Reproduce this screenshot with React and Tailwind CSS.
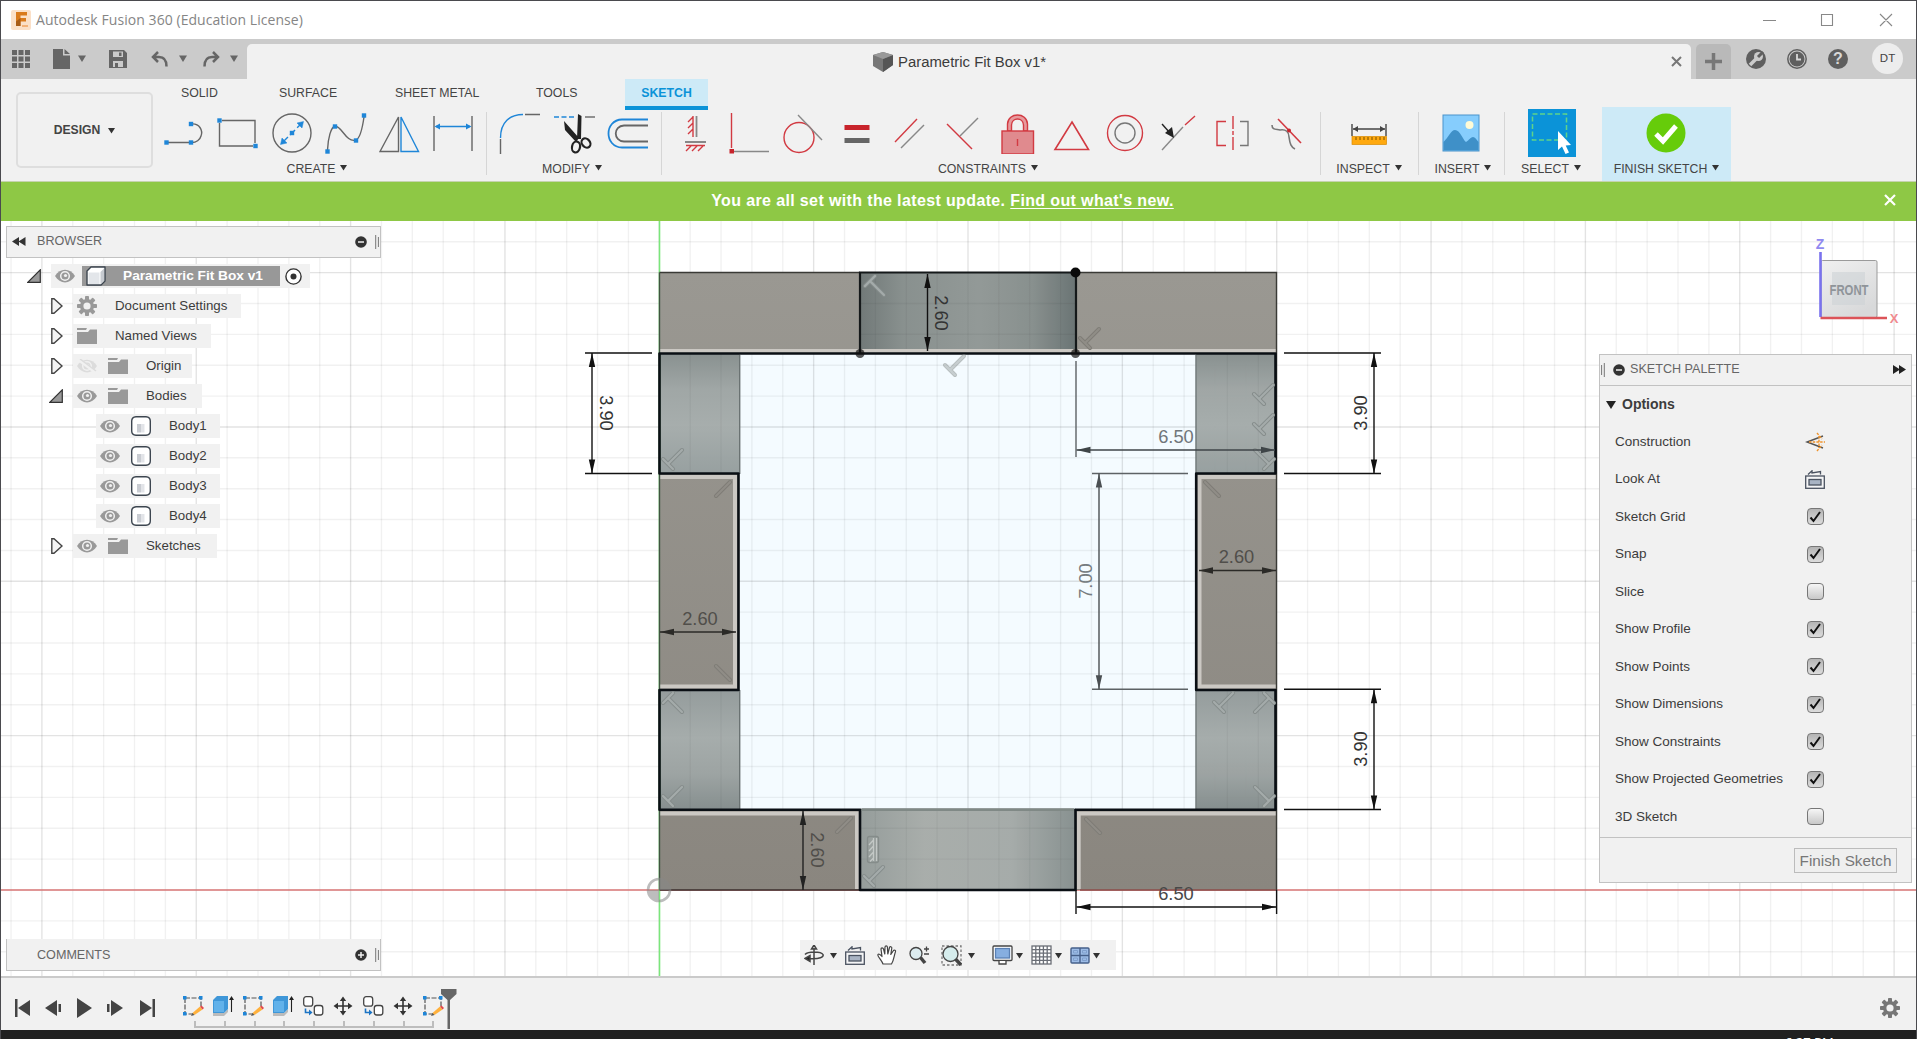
import React from "react";

const BLUE = "#1f86d8";
const RED = "#d23a42";
const GREY = "#666666";

function Arrow({ className = "", color = "#333", w = 7 }) {
  return (
    <svg className={"shrink-0 " + className} width={w} height={7} viewBox="0 0 8 7">
      <path d="M0 0.5H8L4 7Z" fill={color} />
    </svg>
  );
}

/* ---------- ribbon icons, 42 x 42, centred on 21,21 ---------- */
function Ico({ children }) {
  return (
    <svg width="42" height="42" viewBox="0 0 42 42" fill="none" strokeWidth="1.4" stroke={GREY}>
      {children}
    </svg>
  );
}
const Pt = ({ x, y }) => <rect x={x - 2.2} y={y - 2.2} width="4.4" height="4.4" fill={BLUE} stroke="none" />;

const createIcons = [
  <Ico key="line">
    <path d="M2 30.500H25M27 12C36 11 39 19 37 24C36 28 32 30.500 28 30.500" />
    <Pt x={2.500} y={30.500} /><Pt x={27} y={30.500} /><Pt x={27} y={12} />
  </Ico>,
  <Ico key="rect">
    <path d="M5 8.500H38V31M36 34H2.500V11" />
    <Pt x={2.500} y={8.500} /><Pt x={38.500} y={34} />
  </Ico>,
  <Ico key="circle">
    <circle cx="21" cy="21" r="19" />
    <g stroke={BLUE}>
      <path d="M12 30L30 12" strokeDasharray="7 3" />
      <path d="M9.500 32.500L11 26L16 31ZM32.500 9.500L31 16L26 11Z" fill={BLUE} strokeWidth=".5" />
    </g>
    <Pt x={21} y={21} />
  </Ico>,
  <Ico key="spline">
    <path d="M2.500 38C3 26 6 15 10 14C17 14 21 31 31 28C36 26 38 12 39 5" />
    <Pt x={2.500} y={39.500} /><Pt x={10} y={14.500} /><Pt x={31} y={28.500} /><Pt x={39} y={3.500} />
  </Ico>,
  <Ico key="mirror">
    <path d="M19.500 5V39.500H1Z" />
    <path d="M22 5V39.500H39.500Z" stroke={BLUE} />
  </Ico>,
  <Ico key="dim">
    <path d="M2 4V39M40 4V39" />
    <path d="M4 14.500H38" stroke={BLUE} />
    <path d="M2.500 14.500L8 11.500V17.500ZM39.500 14.500L34 11.500V17.500Z" fill={BLUE} stroke="none" />
  </Ico>,
];

const modifyIcons = [
  <Ico key="fillet">
    <path d="M26 2.500H41M1.500 27V42" />
    <path d="M1.500 26C1.500 10 11 2.500 24 2.500" stroke={BLUE} />
  </Ico>,
  <Ico key="trim">
    <path d="M1 5H21" stroke={BLUE} strokeDasharray="5 2.500" /><path d="M32 5H42" />
    <path d="M25 2L28.500 4L28 27L24 27ZM11 9L26 26L23 30L12 18Z" fill="#222" stroke="none" />
    <ellipse cx="23" cy="35" rx="4" ry="5.500" stroke="#222" strokeWidth="2.200" transform="rotate(12 23 35)" />
    <ellipse cx="33" cy="31" rx="4" ry="5" stroke="#222" strokeWidth="2.200" transform="rotate(-40 33 31)" />
  </Ico>,
  <Ico key="offset">
    <path d="M41 7.500H15C-3 8 -3 35 15 35.500H41" stroke={BLUE} strokeWidth="1.800" />
    <path d="M41 13.500H17C6 14 6 29 17 29.500H41" strokeWidth="1.800" />
  </Ico>,
];

const constraintIcons = [
  <Ico key="hv">
    <path d="M22.500 4V25M11 30H32" stroke="#888" strokeWidth="1.800" />
    <path d="M19 4V25M12 33.500H31M19 5L14 10M19 11L14 16M19 17L14 22M17 34L12 39M23 34L18 39M29 34L24 39" stroke={RED} />
  </Ico>,
  <Ico key="coincident">
    <path d="M3.500 1V36" stroke={RED} /><path d="M6 39.500H41" stroke="#888" />
    <rect x="1.500" y="37" width="4.500" height="4.500" fill="#c8242c" stroke="none" />
  </Ico>,
  <Ico key="tangent">
    <circle cx="17" cy="25.500" r="15" stroke={RED} /><path d="M16 3L40 28" stroke="#888" />
  </Ico>,
  <Ico key="equal">
    <rect x="8.500" y="13" width="25" height="5" fill="#c8242c" stroke="none" />
    <rect x="8.500" y="26" width="25" height="5" fill="#666" stroke="none" />
  </Ico>,
  <Ico key="parallel">
    <path d="M6 30L28 7" stroke={RED} /><path d="M12 36L35 13" stroke="#888" />
  </Ico>,
  <Ico key="perp">
    <path d="M4 12L29 37" stroke={RED} /><path d="M17 24L35 6" stroke="#888" />
  </Ico>,
  <Ico key="lock">
    <path d="M10.500 19V12C11 0 30 0 30.500 12V19H26.500V13C26 5 15 5 14.500 13V19Z" fill="#e79a9d" stroke={RED} />
    <rect x="5" y="19" width="31.500" height="23" fill="#e08a8e" stroke={RED} /><path d="M20.500 27V34" stroke={RED} />
  </Ico>,
  <Ico key="mid"><path d="M21 10L37.500 37.500H4Z" stroke={RED} strokeWidth="1.600" /></Ico>,
  <Ico key="concentric">
    <circle cx="21" cy="21" r="17.500" stroke={RED} /><circle cx="21" cy="21" r="10" stroke="#777" />
  </Ico>,
  <Ico key="collinear">
    <path d="M4 38L25 15" stroke="#888" /><path d="M27 13L37 4" stroke={RED} />
    <path d="M4 12L12 21" stroke="#222" /><path d="M16 26L7 21L14 15Z" fill="#222" stroke="none" />
  </Ico>,
  <Ico key="symmetry">
    <path d="M14 9.500H5V33.500H14M21 4V17M21 19V23M21 25V38" stroke={RED} /><path d="M28 9.500H36V33.500H28" stroke="#777" />
  </Ico>,
  <Ico key="curvature">
    <path d="M12 7L35 31" stroke={RED} strokeWidth="1.600" />
    <path d="M6 13C6 18 10 17 14 18C20 17 23 20 23 25C24 32 25 35 29 37" stroke="#777" strokeWidth="1.600" />
    <circle cx="23" cy="18.500" r="2" fill="#c8242c" stroke="none" />
  </Ico>,
];

function Group({ icons, label, className = "", labelClass = "pr-[4px]" }) {
  return (
    <div className={"flex flex-col items-center " + className}>
      <div className="flex h-[50px] items-center pt-px">
        {icons.map((icon, i) => (
          <div key={i} className="flex w-[53.8px] justify-center">{icon}</div>
        ))}
      </div>
      <div className={"flex h-6 items-center gap-[5px] pt-px text-[12.3px] leading-none text-[#444] " + labelClass}>
        <span className="whitespace-nowrap">{label}</span>
        <Arrow className="-mt-1" />
      </div>
    </div>
  );
}
const Sep = () => <div className="mt-[5px] h-[63px] w-px shrink-0 bg-[#d6d6d6]" />;

const inspectIcon = (
  <Ico>
    <path d="M4 12V24M38 12V24M5 17H37" stroke="#444" />
    <path d="M5 17L10 14V20ZM37 17L32 14V20Z" fill="#444" stroke="none" />
    <rect x="4" y="24.500" width="34.500" height="8" fill="#ffa90f" stroke="#d98a00" strokeWidth=".7" />
    <path d="M8 25V28M12 25V28M16 25V28M20 25V28M24 25V28M28 25V28M32 25V28M36 25V28" stroke="#7a5200" strokeWidth="1" />
  </Ico>
);
const insertIcon = (
  <Ico>
    <rect x="3" y="3" width="36" height="36" fill="#86cdfd" stroke="#4a94cc" strokeWidth="1" />
    <path d="M3.500 30C8 26 11 18 15 18C20 18 23 28 26 30C29 28 31 25 33 25C35 25 37 28 38.500 30V38.500H3.500Z" fill="#3f90c8" stroke="none" />
    <circle cx="29.500" cy="13" r="4" fill="#fffbd6" stroke="none" />
  </Ico>
);
const selectIcon = (
  <svg className="-ml-[2px]" width="48" height="48" viewBox="0 0 48 48">
    <rect width="48" height="48" fill="#0b93d8" />
    <rect x="4.500" y="5" width="34" height="26" fill="none" stroke="#5fd38a" strokeWidth="1.500" strokeDasharray="5 2.500" />
    <path d="M30 22V41L34 37.500L37.500 45L41 43.500L37.700 36.500L43 36Z" fill="#fff" />
  </svg>
);
const finishIcon = (
  <Ico>
    <circle cx="21" cy="21" r="19.500" fill="#66cc0a" stroke="none" />
    <path d="M11 22L18 29L31 14" stroke="#fff" strokeWidth="5" />
  </Ico>
);

/* ---------- title bar and tab strip ---------- */
function TitleBar() {
  return (
    <div className="flex h-[39px] items-center bg-white pl-[11px]">
      <svg width="20" height="20" viewBox="0 0 20 20">
        <rect width="20" height="20" rx="2" fill="#fbe0c8" />
        <path d="M5 2H16V5.500H9.500V8H15V11.500H9.500V16H5Z" fill="#d97a1c" />
        <path d="M5 11.500L9.500 8V16H5Z" fill="#a85c16" />
        <path d="M11 15H17V17H11Z" fill="#f3b27a" />
      </svg>
      <span className="ml-[5px] font-['Open_Sans','Noto_Sans',sans-serif] text-[14px] tracking-[0.06px] text-[#858585]">
        Autodesk Fusion 360 (Education License)
      </span>
      <svg className="ml-auto mr-[19px]" width="135" height="16" viewBox="0 0 135 16" fill="none" stroke="#888" strokeWidth="1.100">
        <path d="M0 8.500H13M58.500 2.500H69.500V13.500H58.500ZM117 2L129 14M129 2L117 14" />
      </svg>
    </div>
  );
}

function TabStrip() {
  return (
    <div className="flex h-10 bg-[#cbcbcb]">
      <div className="flex w-[247px] shrink-0 items-center pl-3">
        <svg width="18" height="18" viewBox="0 0 18 18" fill="#666">
          {[0, 6.500, 13].map((y) => [0, 6.500, 13].map((x) => <rect key={x + "-" + y} x={x} y={y} width="5" height="5" />))}
        </svg>
        <svg className="ml-[23px]" width="17" height="20" viewBox="0 0 17 20" fill="#666">
          <path d="M0 0H10V6.500H17V20H0ZM11.500 0L17 5H11.500Z" />
        </svg>
        <Arrow className="-mt-[2px] ml-2" color="#666" w={8} />
        <svg className="ml-[23px]" width="18" height="18" viewBox="0 0 18 18" fill="#666" fillRule="evenodd">
          <path d="M0 0H15L18 3V18H0ZM4 1.500V7H14V1.500ZM4 11V17H14V11ZM10 2.500H12.500V6H10ZM6 13H9V17H6Z" />
        </svg>
        <svg className="ml-6" width="17" height="16" viewBox="0 0 17 16" fill="none" stroke="#666" strokeWidth="2.500">
          <path d="M7 1L2 6L7 11M2.500 6H8C14 6 15.500 10 15.500 15.500" />
        </svg>
        <Arrow className="-mt-[2px] ml-[11px]" color="#666" w={8} />
        <svg className="ml-4" width="17" height="16" viewBox="0 0 17 16" fill="none" stroke="#666" strokeWidth="2.500">
          <path d="M10 1L15 6L10 11M14.500 6H9C3 6 1.500 10 1.500 15.500" />
        </svg>
        <Arrow className="-mt-[2px] ml-[10px]" color="#666" w={8} />
      </div>
      <div className="mt-[5px] flex w-[1444px] shrink-0 items-center rounded-t-[5px] bg-[#f1f1f1] text-[#3c3c3c]">
        <svg className="ml-[626px]" width="20" height="20" viewBox="0 0 20 20">
          <path d="M0 3L10 0L20 3V13L10 20L0 14Z" fill="#777" />
          <path d="M10 7L20 3V13L10 20Z" fill="#555" /><path d="M0 3L10 0L20 3L10 7Z" fill="#999" />
        </svg>
        <span className="ml-[5px] whitespace-nowrap pt-px text-[14.9px]">Parametric Fit Box v1*</span>
        <svg className="ml-auto mr-[9px]" width="11" height="11" viewBox="0 0 11 11" stroke="#777" strokeWidth="2">
          <path d="M1 1L10 10M10 1L1 10" />
        </svg>
      </div>
      <div className="ml-[5px] mt-[5px] flex w-[35px] items-center justify-center rounded-t-[5px] bg-[#b9b9b9]">
        <svg width="17" height="17" viewBox="0 0 17 17" stroke="#777" strokeWidth="3.500"><path d="M8.500 0V17M0 8.500H17" /></svg>
      </div>
      <svg className="ml-[15px] mt-[10px]" width="20" height="20" viewBox="0 0 20 20">
        <circle cx="10" cy="10" r="10" fill="#5f5f5f" />
        <path d="M4 16L11 9" stroke="#cbcbcb" strokeWidth="3.500" />
        <circle cx="12.500" cy="7.500" r="4.500" fill="#cbcbcb" /><path d="M12 8L17 3" stroke="#5f5f5f" strokeWidth="3" />
      </svg>
      <svg className="ml-[21px] mt-[10px]" width="20" height="20" viewBox="0 0 20 20">
        <circle cx="10" cy="10" r="9.200" fill="none" stroke="#5f5f5f" strokeWidth="1.500" /><circle cx="10" cy="10" r="7.500" fill="#5f5f5f" />
        <path d="M10 5V10.500H14" fill="none" stroke="#d8d8d8" strokeWidth="1.800" />
      </svg>
      <div className="ml-[21px] mt-[10px] flex h-5 w-5 items-center justify-center rounded-full bg-[#5f5f5f] text-[16px] font-bold text-[#d8d8d8]">?</div>
      <div className="ml-[24px] mt-[4px] flex h-[31px] w-[31px] items-center justify-center rounded-full bg-[#ededed] text-[11.5px] text-[#444]">DT</div>
    </div>
  );
}

function Ribbon() {
  return (
    <div className="flex h-[102px] bg-[#f1f1f1] text-[#444]">
      <div className="ml-4 mt-[13px] flex h-[76px] w-[137px] shrink-0 items-center justify-center gap-[8px] rounded-[5px] border-2 border-[#dedede] text-[12.2px] font-bold">
        <span className="pt-px">DESIGN</span> <Arrow />
      </div>
      <div className="flex flex-1 flex-col pl-[5px]">
        <div className="flex h-7 pl-[23px] text-[12.3px] leading-[29px]">
          <span className="w-[98px]">SOLID</span>
          <span className="w-[116px]">SURFACE</span>
          <span className="w-[141px]">SHEET METAL</span>
          <span className="w-[89px]">TOOLS</span>
          <span className="h-[31px] w-[83px] border-b-4 border-[#0b93d8] bg-[#cdeaf7] text-center font-bold text-[#0b93d8]">SKETCH</span>
        </div>
        <div className="flex h-[74px]">
          <Group className="w-[328px] pr-[6px]" icons={createIcons} label="CREATE" />
          <Sep />
          <Group className="w-[174px]" icons={modifyIcons} label="MODIFY" />
          <Sep />
          <Group className="w-[658px]" icons={constraintIcons} label="CONSTRAINTS" labelClass="pr-[6px]" />
          <Sep />
          <Group className="w-[97px]" icons={[inspectIcon]} label="INSPECT" labelClass="pr-px" />
          <Sep />
          <Group className="w-[85px]" icons={[insertIcon]} label="INSERT" labelClass="pl-[3px]" />
          <Sep />
          <Group className="w-[97px]" icons={[selectIcon]} label="SELECT" labelClass="pr-[5px]" />
          <Group className="w-[129px] bg-[#cdeaf7]" icons={[finishIcon]} label="FINISH SKETCH" labelClass="" />
        </div>
      </div>
    </div>
  );
}

/* ---------- sketch canvas ---------- */
const U = 30.87;
const OX = 659.3;
const OY = 890;

function Dim({ x1, y1, x2, y2, label, tx, ty, rot = 0, color = "#111", textColor = "#333" }) {
  const vertical = x1 === x2;
  const a = 14;
  const heads = vertical
    ? `M${x1} ${y1}l-3.200 ${a}h6.400ZM${x2} ${y2}l-3.200 ${-a}h6.400Z`
    : `M${x1} ${y1}l${a} -3.200v6.400ZM${x2} ${y2}l${-a} -3.200v6.400Z`;
  return (
    <g>
      <path d={`M${x1} ${y1}L${x2} ${y2}`} stroke={color} strokeWidth="1.400" />
      <path d={heads} fill={color} />
      <text
        x={tx} y={ty} transform={`rotate(${rot} ${tx} ${ty})`} dy="6.500" textAnchor="middle"
        fontSize="18.300" fill={textColor} stroke="none"
      >
        {label}
      </text>
    </g>
  );
}

/* perpendicular mark: cap at x,y with the stem leaving in direction dx,dy */
function Tee({ x, y, dx, dy, cap = true, dark = false }) {
  const stem = `M${x} ${y}l${dx * 14} ${dy * 14}`;
  const bar = cap ? `M${x - dy * 5} ${y + dx * 5}L${x + dy * 5} ${y - dx * 5}` : "";
  return (
    <g strokeLinecap="round" fill="none">
      <path d={stem + bar} stroke={dark ? "#7e7c76" : "#858c8b"} strokeWidth="4" />
      <path d={stem + bar} stroke={dark ? "#908d87" : "#a4abaa"} strokeWidth="2.200" />
    </g>
  );
}

function Canvas() {
  const xs = Array.from({ length: 63 }, (_, i) => i - 21);
  const ys = Array.from({ length: 24 }, (_, i) => i - 2);
  const outline =
    "M660 353.500H1275.500V473.500H1196.200V690H1275.500V809.700H1075.500V890H860V809.700H659.500V690H738.500V473.500H659.500V353.500Z";
  return (
    <svg className="absolute inset-0 font-['Liberation_Sans',Arial,sans-serif]" width="1917" height="755" viewBox="0 221 1917 755">
      <defs>
        <linearGradient id="topMid"><stop offset="0" stopColor="#6d7574" /><stop offset=".2" stopColor="#858d8b" /><stop offset=".55" stopColor="#8f9694" /><stop offset=".8" stopColor="#858d8b" /><stop offset="1" stopColor="#667070" /></linearGradient>
        <linearGradient id="botMid"><stop offset="0" stopColor="#929a98" /><stop offset=".3" stopColor="#a6aba8" /><stop offset=".7" stopColor="#a3a9a7" /><stop offset="1" stopColor="#858e8d" /></linearGradient>
        <linearGradient id="upper" x2="0" y2="1"><stop offset="0" stopColor="#858d8c" /><stop offset=".3" stopColor="#9da4a3" /><stop offset=".6" stopColor="#a4abaa" /><stop offset="1" stopColor="#949d9d" /></linearGradient>
        <linearGradient id="lower" x2="0" y2="1"><stop offset="0" stopColor="#919999" /><stop offset=".4" stopColor="#a3aaa9" /><stop offset=".7" stopColor="#9aa1a0" /><stop offset="1" stopColor="#828b8b" /></linearGradient>
        <linearGradient id="brown" gradientUnits="userSpaceOnUse" x1="0" y1="272" x2="0" y2="890"><stop offset="0" stopColor="#9a9892" /><stop offset="1" stopColor="#8a867f" /></linearGradient>
        <linearGradient id="cube" x2=".6" y2="1"><stop offset="0" stopColor="#f0f0f0" /><stop offset="1" stopColor="#d8d9da" /></linearGradient>
        <filter id="soft" x="-20%" y="-300%" width="140%" height="700%"><feGaussianBlur stdDeviation="3" /></filter>
      </defs>
      <rect x="739.600" y="353" width="456.800" height="457" fill="#f4fbff" />
      <g stroke="#000">
        {xs.map((i) => (
          <path key={i} d={`M${OX + i * U} 221V976`} strokeOpacity={i % 5 === 0 ? 0.11 : 0.055} strokeWidth="1.400" />
        ))}
        {ys.map((i) => (
          <path key={i} d={`M0 ${OY - i * U}H1917`} strokeOpacity={i % 5 === 0 ? 0.11 : 0.055} strokeWidth="1.400" />
        ))}
      </g>
      <g opacity=".97">
        <rect x="860" y="272.500" width="216" height="81" fill="url(#topMid)" />
        <rect x="860" y="809.700" width="216" height="80.300" fill="url(#botMid)" />
        {[659.3, 1196.2].map((x) => (
          <g key={x}>
            <rect x={x} y="353" width="80.500" height="121" fill="url(#upper)" />
            <rect x={x} y="689.500" width="80.500" height="120.500" fill="url(#lower)" />
          </g>
        ))}
      </g>
      <g stroke="#000" strokeOpacity=".035" strokeWidth="1.400">
        <path d="M690.200 353V474M721 353V474M690.200 690V810M721 690V810M1227.400 353V474M1258.300 353V474M1227.400 690V810M1258.300 690V810" />
        <path d="M875.400 273V353M906.300 273V353M937.100 273V353M968 273V353M998.900 273V353M1029.700 273V353M1060.600 273V353M875.400 810V890M906.300 810V890M937.100 810V890M968 810V890M998.900 810V890M1029.700 810V890M1060.600 810V890" />
        <path d="M860 303.500H1076M860 334.300H1076M860 828.300H1076M860 859.100H1076" />
      </g>
      <path d="M0 890H1917" stroke="#dd7a7a" strokeWidth="1.500" />
      <path d="M659.500 221V976" stroke="#7be67b" strokeWidth="1.600" />
      <g fill="url(#brown)">
        <path d="M659.500 272.500H860V353H659.500ZM1076 272.500H1276.500V353H1076ZM659.500 474H739V690H659.500ZM1196.500 474H1276.500V690H1196.500ZM659.500 810H860V890H659.500ZM1076 810H1276.500V890H1076Z" />
      </g>
      <g fill="none">
        <path d="M659.500 351H1276.500M660 477H735V686.500H660M1276 477H1199.500V686.500H1276M660 813.500H857V889M1276 813.500H1078.700V889" stroke="#cbc8c3" strokeWidth="4" />
        <path d="M659.500 272.500H860M1076 272.500H1276.500V890" stroke="#3a3a36" strokeWidth="1.400" />
        <path d="M659.500 272.500V890" stroke="#3f5540" strokeWidth="1.400" />
        <path d="M659.500 890H860" stroke="#3b2e2c" strokeWidth="1.500" />
        <path d="M1080 890H1276" stroke="#8c4d4a" strokeWidth="1.500" />
        <path d="M739.700 355V474M1196 355V474M739.700 690V809M1196 690V809M860 809.500H1076" stroke="#6a7272" strokeWidth="1.400" />
        <path d={outline} stroke="#0a0f14" strokeWidth="2.600" strokeLinejoin="round" />
        <path d="M860 353V272.500H1076V353" stroke="#15191a" strokeWidth="2.200" />
        <path d="M861.500 809.600H1074" stroke="#808986" strokeWidth="2.800" />
      </g>
      <circle cx="1075.500" cy="272.500" r="5" fill="#0a0a0a" />
      <circle cx="1075.500" cy="353.500" r="4.500" fill="#111" fillOpacity=".7" />
      <circle cx="860" cy="353.500" r="4.500" fill="#111" fillOpacity=".7" />

      <Tee x={870} y={281} dx={1} dy={1} />
      <g opacity=".55"><Tee x={950} y={370} dx={1} dy={-1} /></g>
      <Tee x={668} y={464} dx={1} dy={-1} />
      <Tee x={716} y={496} dx={1} dy={-1} cap={false} dark />
      <Tee x={668} y={698} dx={1} dy={1} />
      <Tee x={716} y={666} dx={1} dy={1} cap={false} dark />
      <Tee x={668} y={801} dx={1} dy={-1} />
      <Tee x={837} y={832} dx={1} dy={-1} cap={false} dark />
      <Tee x={869} y={881} dx={1} dy={-1} />
      <Tee x={1085} y={343} dx={1} dy={-1} dark />
      <Tee x={1259} y={399} dx={1} dy={-1} />
      <Tee x={1259} y={429} dx={1} dy={-1} />
      <Tee x={1269} y={464} dx={-1} dy={-1} />
      <Tee x={1205} y={482} dx={1} dy={1} cap={false} dark />
      <Tee x={1219} y={707} dx={1} dy={-1} />
      <Tee x={1269} y={698} dx={-1} dy={1} />
      <Tee x={1269} y={801} dx={-1} dy={-1} />
      <Tee x={1086} y={819} dx={1} dy={1} cap={false} dark />
      <g fill="none" stroke="#c3c8c6" strokeWidth="1.300">
        <rect x="867.500" y="836.500" width="11" height="26" rx="2" stroke="#858c8a" />
        <path d="M876.500 838V861M873.500 838V861M873.500 840L869 845M873.500 846L869 851M873.500 852L869 857M873.500 858L870 861.500" />
      </g>

      <g stroke="#111" strokeWidth="1.400">
        <path d="M585 353H652M585 473.500H652M1284 353H1381M1284 473.500H1381M1284 689.300H1381M1284 809.500H1381M1076 890V914M1276.600 890V914" />
        <path d="M1092 473.500H1188M1092 689.300H1188M1076 361V457" stroke="#5d6265" />
      </g>
      <Dim x1={592} y1={353} x2={592} y2={473.500} label="3.90" tx={606} ty={413} rot={90} />
      <Dim x1={1374} y1={353} x2={1374} y2={473.500} label="3.90" tx={1360} ty={413} rot={-90} />
      <Dim x1={1374} y1={689.300} x2={1374} y2={809.500} label="3.90" tx={1360} ty={749} rot={-90} />
      <Dim x1={927.500} y1={274} x2={927.500} y2={351} label="2.60" tx={941} ty={313} rot={90} />
      <Dim x1={803} y1={811} x2={803} y2={890} label="2.60" tx={817} ty={850} rot={90} color="#222" textColor="#504e4a" />
      <Dim x1={1076.500} y1={450} x2={1275} y2={450} label="6.50" tx={1176} ty={436} color="#3f4548" textColor="#70767a" />
      <Dim x1={1099} y1={473.500} x2={1099} y2={689.300} label="7.00" tx={1085} ty={581} rot={-90} color="#4a4f52" textColor="#767c80" />
      <Dim x1={1199} y1={570.500} x2={1276} y2={570.500} label="2.60" tx={1236.500} ty={556.500} color="#2b2a27" textColor="#504e4a" />
      <Dim x1={660} y1={632} x2={736} y2={632} label="2.60" tx={700} ty={618.500} color="#2b2a27" textColor="#504e4a" />
      <Dim x1={1076.500} y1={907} x2={1276} y2={907} label="6.50" tx={1176} ty={893} textColor="#484848" />

      <g opacity=".55">
        <circle cx="659" cy="890" r="11" fill="none" stroke="#888" strokeWidth="2.600" />
        <path d="M659 890V879A11 11 0 0 1 670 890ZM659 890V901A11 11 0 0 1 648 890Z" fill="#888" />
      </g>

      <path d="M1812 320H1885" stroke="#999" strokeWidth="5" filter="url(#soft)" />
      <rect x="1821" y="260.500" width="56" height="57" rx="1.500" fill="url(#cube)" stroke="#9a9a9a" />
      <rect x="1832" y="272" width="33" height="33" fill="#cdd2d6" opacity=".6" />
      <path d="M1820.500 252V317" stroke="#7a72ee" strokeWidth="2.600" />
      <path d="M1820.500 318H1887" stroke="#dc5358" strokeWidth="2.600" />
      <text x="1849" y="294.500" textAnchor="middle" fontSize="14" textLength="39" lengthAdjust="spacingAndGlyphs" fontWeight="700" fill="#8f9499">FRONT</text>
      <text x="1820" y="249" textAnchor="middle" fontSize="14" fontWeight="700" fill="#9089f0">Z</text>
      <text x="1894" y="323" textAnchor="middle" fontSize="13" fontWeight="700" fill="#f08a8e">X</text>
    </svg>
  );
}

/* ---------- browser tree ---------- */
const Eye = ({ off }) => (
  <svg className="shrink-0" width="20" height="14" viewBox="0 0 20 14">
    <path d="M0 7C5 -1.500 15 -1.500 20 7C15 15.500 5 15.500 0 7Z" fill={off ? "#dcdcdc" : "#999"} />
    <circle cx="10" cy="7" r="4.300" fill={off ? "#dcdcdc" : "#999"} stroke="#f1f1f1" strokeWidth="1.500" />
    <circle cx="10.500" cy="6.500" r="1.600" fill="#f1f1f1" />
    {off && <path d="M2 1L18 13" stroke="#f1f1f1" strokeWidth="3" />}
    {off && <path d="M3 0L19 12" stroke="#dcdcdc" strokeWidth="1.500" />}
  </svg>
);
const Folder = () => (
  <svg className="shrink-0" width="20" height="16" viewBox="0 0 20 16" fill="#999">
    <path d="M0 4H11L13 1.500H20V16H0ZM0 0H10L9 2H0Z" />
  </svg>
);
const Gear = ({ size = 20, color = "#999", hole = "#f1f1f1" }) => (
  <svg className="shrink-0" width={size} height={size} viewBox="0 0 20 20">
    <g fill={color}>
      {[0, 45, 90, 135].map((r) => (
        <rect key={r} x="8" y="0" width="4" height="20" rx=".8" transform={`rotate(${r} 10 10)`} />
      ))}
      <circle cx="10" cy="10" r="7" />
    </g>
    <circle cx="10" cy="10" r="3.600" fill={hole} />
  </svg>
);
const BodyIcon = () => (
  <svg className="shrink-0" width="20" height="20" viewBox="0 0 20 20">
    <path d="M5 0.700H15C18 1 19.300 2.500 19.300 5V15C19.300 17.500 18 19 15 19.300H5C2 19 .7 17.500 .7 15V5C.7 2.500 2 1 5 .7Z" fill="#fff" stroke="#3d4650" strokeWidth="1.400" />
    <path d="M6 8H10V16.500H6Z" fill="#c9ccd2" /><path d="M10 8H13.500V16.500H10Z" fill="#e2e4e8" />
  </svg>
);
const Cube = () => (
  <svg className="shrink-0" width="20" height="20" viewBox="0 0 20 20">
    <path d="M1 5L5 1H19V15L15 19H1Z" fill="#fff" stroke="#3d4650" strokeWidth="1.400" strokeLinejoin="round" />
    <path d="M2.500 6.500H13.500V18H2.500Z" fill="#e3e6ea" />
    <path d="M14.500 6L18 2.500V14.500L14.500 18Z" fill="#c6cad0" />
  </svg>
);
const Open = () => (
  <svg className="shrink-0" width="14" height="14" viewBox="0 0 14 14"><path d="M13.300 0.800V13.300H0.800Z" fill="#999" stroke="#333" strokeWidth="1.200" /></svg>
);
const Closed = () => (
  <svg className="shrink-0" width="12" height="16" viewBox="0 0 12 16"><path d="M0.800 0.800H3L11 8L3 15.200H0.800Z" fill="#f4f4f4" stroke="#444" strokeWidth="1.400" /></svg>
);

const rows = [
  { label: "Document Settings", box: "w-[168px]", icons: [<Gear key="g" />], closed: true },
  { label: "Named Views", box: "w-[138px]", icons: [<Folder key="f" />], closed: true },
  { label: "Origin", box: "w-[119px]", icons: [<Eye key="e" off />, <Folder key="f" />], closed: true },
  { label: "Bodies", box: "w-[129px]", icons: [<Eye key="e" />, <Folder key="f" />] },
  { label: "Body1", box: "w-[124px]", body: true },
  { label: "Body2", box: "w-[124px]", body: true },
  { label: "Body3", box: "w-[124px]", body: true },
  { label: "Body4", box: "w-[124px]", body: true },
  { label: "Sketches", box: "w-[144px]", icons: [<Eye key="e" />, <Folder key="f" />], closed: true },
];

const RoundSign = ({ plus }) => (
  <svg width="12" height="12" viewBox="0 0 12 12">
    <circle cx="6" cy="6" r="5.800" fill="#333" />
    <path d={plus ? "M3 6H9M6 3V9" : "M3 6H9"} stroke="#f1f1f1" strokeWidth="1.500" />
  </svg>
);
const Grip = ({ flip }) => (
  <svg width="4" height="14" viewBox="0 0 4 14" className={flip ? "rotate-180" : ""}>
    <path d="M.7 0V14M3.400 2V12" stroke="#777" strokeWidth="1" />
  </svg>
);

function Browser() {
  return (
    <div className="absolute left-[6px] top-[5px] w-[375px]">
      <div className="flex h-[32px] items-center border border-[#c2c2c2] bg-[#f1f1f1] pb-px text-[12.6px] text-[#666]">
        <svg className="ml-[5px]" width="14" height="9" viewBox="0 0 14 9"><path d="M7 0V9L0 4.500ZM13.500 0V9L6.500 4.500Z" fill="#333" /></svg>
        <span className="ml-[11px]">BROWSER</span>
        <span className="ml-auto"><RoundSign /></span>
        <span className="ml-[8px] mr-px"><Grip /></span>
      </div>
      <div className="mt-[3px] text-[13.3px] text-[#3c3c3c]">
        <div className="flex h-[30px] items-center pl-[21px]">
          <Open />
          <div className="ml-[10px] flex h-6 w-[259px] items-center bg-[#f1f1f1] pl-1">
            <Eye />
            <div className="ml-[7px] flex h-5 w-[198px] items-center bg-[#989898] pl-1 font-bold text-white">
              <Cube />
              <span className="ml-[17px] whitespace-nowrap text-[13.7px]">Parametric Fit Box v1</span>
            </div>
            <svg className="ml-[5px]" width="17" height="17" viewBox="0 0 17 17">
              <circle cx="8.500" cy="8.500" r="7.600" fill="#fff" stroke="#333" strokeWidth="1.400" /><circle cx="8.500" cy="8.500" r="3" fill="#333" />
            </svg>
          </div>
        </div>
        {rows.map((r) => (
          <div key={r.label} className={"flex h-[30px] items-center " + (r.body ? "pl-[90px]" : "pl-[43px]")}>
            {!r.body && <div className={"flex w-[24px] " + (r.closed ? "pl-[2px]" : "")}>{r.closed ? <Closed /> : <Open />}</div>}
            <div className={"flex h-6 items-center bg-[#f1f1f1] pl-1 " + r.box}>
              {r.body ? <><Eye /><span className="ml-[11px]"><BodyIcon /></span></> : <div className="flex items-center gap-[11px]">{r.icons}</div>}
              <span className="ml-[18px] whitespace-nowrap">{r.label}</span>
            </div>
          </div>
        ))}
      </div>
    </div>
  );
}

function Comments() {
  return (
    <div className="absolute left-[6px] top-[718px] flex h-[32px] w-[375px] items-center border border-t-0 border-[#c2c2c2] bg-[#f1f1f1] pl-[30px] text-[12.6px] text-[#666]">
      <span className="pt-px">COMMENTS</span>
      <span className="ml-auto"><RoundSign plus /></span>
      <span className="ml-[8px] mr-px"><Grip /></span>
    </div>
  );
}

/* ---------- sketch palette ---------- */
const LookAt = () => (
  <svg width="20" height="19" viewBox="0 0 20 19" fill="none" stroke="#4a5260" strokeWidth="1.300">
    <rect x=".7" y="6" width="18.600" height="12.300" fill="#f4f5f6" />
    <rect x="4" y="9.500" width="12" height="5.500" fill="#a9b4c4" />
    <path d="M3 4.500L7 .8V3L15.500 1.500V4.500" />
  </svg>
);
const Check = ({ on }) => (
  <div className={"flex h-[17px] w-[17px] items-center justify-center rounded-[4px] border-[1.5px] border-[#777] bg-linear-to-b " + (on ? "from-[#b4b4b4] to-[#dcdcdc]" : "from-[#f6f6f6] to-[#c8c8c8]")}>
    {on && <svg width="12" height="12" viewBox="0 0 12 12" fill="none" stroke="#111" strokeWidth="2"><path d="M1.500 6.500L4.500 10L11 1" /></svg>}
  </div>
);
const options = [
  ["Construction", "construction"], ["Look At", "look"], ["Sketch Grid", true], ["Snap", true], ["Slice", false],
  ["Show Profile", true], ["Show Points", true], ["Show Dimensions", true], ["Show Constraints", true],
  ["Show Projected Geometries", true], ["3D Sketch", false],
];
function Palette() {
  return (
    <div className="absolute left-[1599px] top-[133px] flex h-[529px] w-[313px] flex-col border border-[#c2c2c2] bg-[#f1f1f1] text-[#3c3c3c]">
      <div className="flex h-[31px] items-center border-b border-[#c2c2c2] pb-px text-[12.6px] text-[#666]">
        <span className="ml-px"><Grip flip /></span>
        <span className="ml-[8px]"><RoundSign /></span>
        <span className="ml-[5px]">SKETCH PALETTE</span>
        <svg className="ml-auto mr-[5px]" width="13" height="9" viewBox="0 0 13 9"><path d="M0 0V9L7 4.500ZM6 0V9L13 4.500Z" fill="#222" /></svg>
      </div>
      <div className="flex h-[37px] items-center gap-[6px] pl-[6px] text-[14px] font-bold">
        <svg width="10" height="8" viewBox="0 0 10 8"><path d="M0 0H10L5 8Z" fill="#222" /></svg>
        Options
      </div>
      <div className="flex flex-col">
        {options.map(([label, v]) => (
          <div key={label} className="flex h-[37.5px] items-center pl-[15px] text-[13.5px]">
            <span className="w-[180px] whitespace-nowrap">{label}</span>
            <div className="flex w-[40px] justify-center">
              {v === "construction" ? (
                <svg width="20" height="20" viewBox="0 0 20 20" fill="none">
                  <path d="M18 4L2 10L18 16" stroke="#555" strokeWidth="1.500" />
                  <path d="M4 10H20M12 1L17 7M12 19L17 13M14 4V16" stroke="#f0932b" strokeWidth="1.400" strokeDasharray="2.500 1.200" />
                </svg>
              ) : v === "look" ? <LookAt /> : <Check on={v} />}
            </div>
          </div>
        ))}
      </div>
      <div className="mt-auto flex h-[45px] items-center justify-end border-t border-[#c2c2c2] pr-[14px]">
        <button className="h-[25px] w-[103px] whitespace-nowrap border border-[#bcbcbc] bg-[#efefef] pt-px text-[15.3px] leading-none text-[#777]">Finish Sketch</button>
      </div>
    </div>
  );
}

/* ---------- navigation bar ---------- */
function NavBar() {
  return (
    <div className="absolute left-[800px] top-[719px] flex h-[30px] w-[316px] items-center bg-[#f1f1f1] pl-1">
      <svg width="20" height="20" viewBox="0 0 20 20" fill="none" stroke="#444" strokeWidth="1.500">
        <path d="M10 3V20M10 0L7.500 4H12.500ZM4 13.500C16 14.500 20 12 19 9.500C17 6 4 6 1 9.500" /><path d="M1 13.500L6 10.500V16.500Z" fill="#222" />
      </svg>
      <Arrow className="ml-[6px]" />
      <span className="ml-[8px]"><LookAt /></span>
      <svg className="ml-[12px]" width="20" height="20" viewBox="0 0 20 20" fill="#fff" stroke="#444" strokeWidth="1.200" strokeLinejoin="round">
        <path d="M6 19C5 16 1 12 .8 10C1 8.500 3 9 5 11.500L4 4C4 2.500 6 2.500 6.500 4L7.800 9L8 2C8.200 .5 10.200 .5 10.400 2L10.800 9L12.500 2.500C13 1.200 15 1.600 14.800 3L13.800 9.500L16.500 5.500C17.300 4.600 19 5.200 18.500 6.600C17 10.500 17 15 14.500 19Z" />
      </svg>
      <svg className="ml-[12px]" width="21" height="20" viewBox="0 0 21 20" fill="none" stroke="#444" strokeWidth="1.300">
        <path d="M11.500 12.500L16 18" strokeWidth="3.500" /><circle cx="7" cy="8.500" r="6" fill="#dcecf0" /><path d="M15 4H20M17.500 1.500V6.500M15 9H20" />
      </svg>
      <svg className="ml-[11px]" width="21" height="21" viewBox="0 0 21 21" fill="none" stroke="#444" strokeWidth="1.300">
        <path d="M1 1H20V20H1Z" strokeDasharray="2.500 2" stroke="#777" /><path d="M14.500 14L20 20" strokeWidth="3.500" /><circle cx="9.500" cy="9" r="7.500" fill="#d5ecec" />
      </svg>
      <Arrow className="ml-[6px]" />
      <svg className="ml-[17px]" width="21" height="20" viewBox="0 0 21 20" fill="#fff" stroke="#444" strokeWidth="1.300">
        <rect x="1" y="1" width="19" height="14.500" rx="1" /><rect x="3.500" y="3.500" width="14" height="9.500" fill="#86aee0" stroke="#5a80b4" /><path d="M7 16V19H14V16" />
      </svg>
      <Arrow className="ml-[3px]" />
      <svg className="ml-[8px]" width="21" height="20" viewBox="0 0 21 20" fill="#fff" stroke="#6a6e76" strokeWidth="1.300">
        <rect x="1" y="1" width="19" height="18" /><path d="M4.800 1V19M8.600 1V19M12.400 1V19M16.200 1V19M1 4.600H20M1 8.200H20M1 11.800H20M1 15.400H20" />
      </svg>
      <Arrow className="ml-[3px]" />
      <svg className="ml-[8px]" width="20" height="17" viewBox="0 0 20 17" fill="#9dbce6" stroke="#46608a" strokeWidth="1.400">
        <rect x="1" y="1" width="18" height="15" rx="1" /><path d="M10 1V16M1 8.500H19" /><path d="M3.500 3.500H7.500V6H3.500ZM12.500 3.500H16.500V6H12.500ZM3.500 11H7.500V13.500H3.500ZM12.500 11H16.500V13.500H12.500Z" stroke="#7f9fcc" strokeWidth="1" />
      </svg>
      <Arrow className="ml-[3px]" />
    </div>
  );
}

/* ---------- timeline ---------- */
const feature = {
  sketch: (
    <svg width="22" height="22" viewBox="0 0 22 22" fill="none">
      <path d="M3 3H19V11M3 3V19H12" stroke="#555" strokeWidth="1.200" strokeDasharray="5 1.500" />
      {[[2, 2], [18, 2], [2, 18]].map(([x, y]) => <rect key={x + "." + y} x={x - 1} y={y - 1} width="3.500" height="3.500" fill={BLUE} />)}
      <path d="M10.500 18L18 11.500L20.500 14.500L12.500 20Z" fill="#ffb13d" /><path d="M18 11.500L19.500 10.500L22 13L20.500 14.500Z" fill="#e2474b" /><path d="M9 21L10.500 18L12.500 20Z" fill="#555" />
    </svg>
  ),
  extrude: (
    <svg width="22" height="22" viewBox="0 0 22 22">
      <path d="M1 18H12L16 14V17L12 21H1Z" fill="#bbb" />
      <path d="M1 5L5 1H16V14L12 18H1Z" fill="#3f97d8" /><path d="M2 6H12V17H2Z" fill="#62b2ea" />
      <path d="M19.500 4V17M18 4.500L19.500 2L21 4.500Z" stroke="#222" strokeWidth="1.100" fill="#222" />
    </svg>
  ),
  copy: (
    <svg width="22" height="22" viewBox="0 0 22 22" fill="#fff" stroke="#444" strokeWidth="1.300">
      <rect x="1.700" y="1.700" width="9" height="9.500" rx="2.500" /><rect x="12.300" y="10.500" width="8.500" height="9.500" rx="2.500" />
      <path d="M3.500 13.500V17.500H7" fill="none" stroke="#1c74c4" strokeWidth="1.600" /><path d="M7 14.500L10.500 17.500L7 20.500Z" fill="#1c74c4" stroke="none" />
    </svg>
  ),
  move: (
    <svg width="22" height="22" viewBox="0 0 22 22">
      <path d="M11 3V19M3 11H19" stroke="#333" strokeWidth="1.600" />
      <path d="M11 1.500L14.200 6H7.800ZM11 20.500L14.200 16H7.800ZM1.500 11L6 7.800V14.200ZM20.500 11L16 7.800V14.200Z" fill="#333" />
    </svg>
  ),
};
const history = ["sketch", "extrude", "sketch", "extrude", "copy", "move", "copy", "move", "sketch"];

function Timeline() {
  return (
    <div className="relative flex h-[54px] border-t-2 border-[#cacaca] bg-[#f1f1f1]">
      <svg className="ml-[15px] mt-[20px]" width="142" height="20" viewBox="0 0 142 20" fill="#444">
        <path d="M0 1H2.500V19H0ZM15 2V18L3 10ZM42 2V18L30 10ZM43.500 6H46V14H43.500ZM62 0L77 10L62 20ZM92 6H94.500V14H92ZM96 2L108 10L96 18ZM125 2L137 10L125 18ZM137.500 1H140V19H137.500Z" />
      </svg>
      <div className="ml-[21px] flex flex-col">
        <div className="mt-[17px] flex h-[22px]">
          {history.map((h, i) => <div key={i} className="flex w-[30px] justify-center">{feature[h]}</div>)}
        </div>
        <div className="ml-4 mt-[4px] flex h-[7px] w-[240px] border-b-2 border-[#bdbdbd]">
          {history.map((h, i) => <div key={i} className="w-[29.8px] shrink-0 border-l-2 border-[#bdbdbd]" />)}
        </div>
      </div>
      <svg className="absolute left-[441px] top-[11px]" width="16" height="42" viewBox="0 0 16 42"><path d="M0 0H15.500V5L9 11V40H6.500V11L0 5Z" fill="#666" /></svg>
      <div className="ml-auto mr-[17px] mt-[20px]"><Gear color="#777" /></div>
    </div>
  );
}

export default function App() {
  return (
    <div className="relative flex h-[1039px] w-[1917px] flex-col overflow-hidden bg-white font-['Liberation_Sans',Arial,sans-serif]">
      <TitleBar />
      <TabStrip />
      <Ribbon />
      <div className="relative flex h-10 items-center justify-center border-t border-[#c5d3ae] bg-[#8ec845] pb-px text-[16px] font-bold tracking-[0.37px] text-white">
        <span className="-ml-8">You are all set with the latest update. <span className="underline underline-offset-2">Find out what's new.</span></span>
        <svg className="absolute right-[21px] top-[12px]" width="12" height="12" viewBox="0 0 12 12" stroke="#fff" strokeWidth="2.200"><path d="M1 1L11 11M11 1L1 11" /></svg>
      </div>
      <div className="relative h-[755px] overflow-hidden">
        <Canvas />
        <Browser />
        <Comments />
        <Palette />
        <NavBar />
      </div>
      <Timeline />
      <div className="h-[9px] overflow-hidden bg-[#202020] text-white">
        <div className="ml-[1785px] mt-[4px] font-['Open_Sans',sans-serif] text-[13px] leading-[16px]">6:27 PM</div>
      </div>
      <div className="pointer-events-none absolute inset-0 border border-b-0 border-[#4a4a4e]" />
    </div>
  );
}
